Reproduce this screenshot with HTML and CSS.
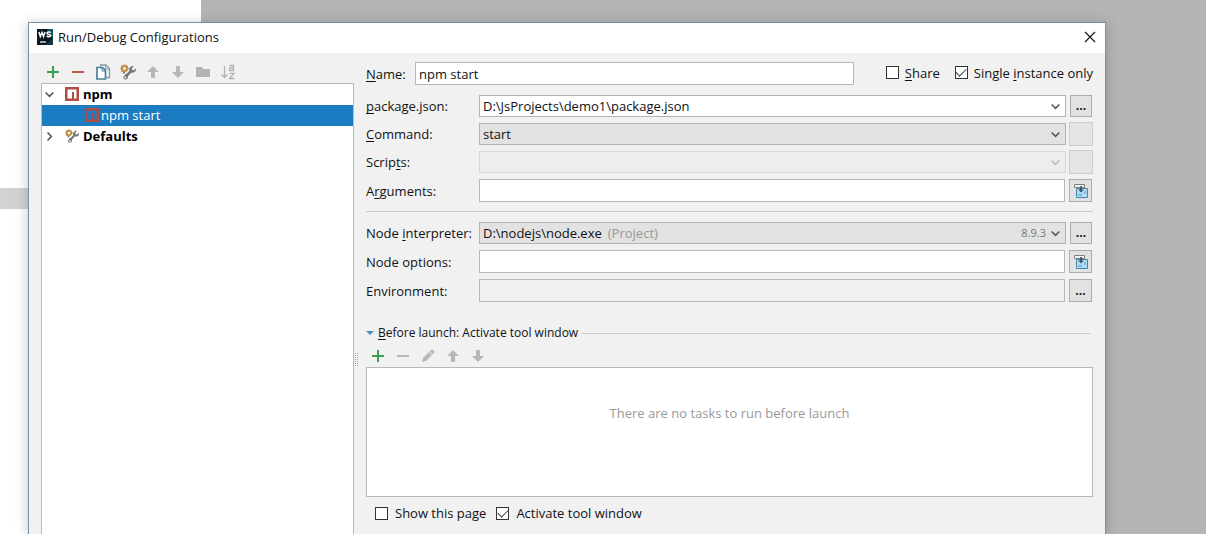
FILE: index.html
```
<!DOCTYPE html>
<html lang="en">
<head>
<meta charset="utf-8">
<title>Run/Debug Configurations</title>
<link rel="stylesheet" href="styles.css">
</head>
<body>
<svg class="defs" aria-hidden="true">
  <defs>
    <symbol id="plus" viewBox="0 0 16 16"><path d="M7 2h2v5h5v2H9v5H7V9H2V7h5z" fill="currentColor"/></symbol>
    <symbol id="minus" viewBox="0 0 16 16"><path d="M2 7h12v2H2z" fill="currentColor"/></symbol>
    <symbol id="up" viewBox="0 0 16 16"><path d="M8 2l6 6h-4v6H6V8H2z" fill="currentColor"/></symbol>
    <symbol id="down" viewBox="0 0 16 16"><path d="M8 14L2 8h4V2h4v6h4z" fill="currentColor"/></symbol>
    <symbol id="chevron" viewBox="0 0 10 10"><path d="M1.500 3.200L5 6.700l3.500-3.500" fill="none" stroke="currentColor" stroke-width="1.400"/></symbol>
    <symbol id="tools" viewBox="0 0 16 16">
      <path d="M4 8v1.500M5.500 10.500l1 3" stroke="#777" stroke-width="2"/>
      <circle cx="4.500" cy="4.600" r="2.500" fill="none" stroke="#c08a42" stroke-width="2"/>
      <path d="M4.500 .4v1.200M.3 4.600h1M7.500 4.600h1.300M1.400 1.600l.9.9M7.500 1.600l-.8.8M1.400 7.700l.9-.9" stroke="#c08a42" stroke-width="1.500"/>
      <path d="M13.800 2l-2 2.300.3 1.700 1.700.3L16 4.400c.3 2-.6 3.800-2.400 4.200-.8.2-1.500.1-2.100-.2L8 12c.2 1.700-.7 3.600-2.600 3.600-1.500 0-2.500-1.600-1.600-3L9.300 7C8.500 4.200 10.500 1.500 13.800 2z" fill="#767676"/>
      <circle cx="5.400" cy="13.600" r="1" fill="#f1f1f1"/>
    </symbol>
    <symbol id="npm" viewBox="0 0 14 14"><path d="M0 0h14v14H0z" fill="#b04c42"/><path d="M2.500 2.500h9v9H9V5H7v6.500H2.500z" fill="var(--inner, #fff)"/></symbol>
    <symbol id="insert" viewBox="0 0 16 16">
      <path d="M3.500 5.500h11v9h-11z" fill="#b4dbf2" stroke="#4288b0"/>
      <path d="M5 11h4v2H5zM11 8h2v3h-2z" fill="#7cb9df"/>
      <path d="M1.500 4.500v-3h10v3z" fill="#f4f4f4" stroke="#808080"/>
      <path d="M7.200 3h1.600v3.500h2L8 9.500l-2.800-3h2z" fill="#42525c"/>
    </symbol>
  </defs>
</svg>

<div class="desktop">
  <div class="backdrop"><div class="backdrop-row"></div></div>

  <main class="dialog">
    <header class="titlebar">
      <svg class="app-icon" viewBox="0 0 16 16" aria-hidden="true">
        <path d="M0 0h16v16H0z" fill="#0b1a20"/><path d="M10 0h6v10z" fill="#175361"/><path d="M16 9v7H9z" fill="#123b46"/>
        <path d="M2 3l1.300 4.500L5 3.500l1.500 4L8 3M13.700 3.700C12.500 2.600 10 2.800 10 4.200c0 1.600 3.700.8 3.700 2.300 0 1.300-2.700 1.600-4 .4" fill="none" stroke="#fff" stroke-width="1.500"/>
        <path d="M3 13h6" stroke="#fff" stroke-width="1.200"/>
      </svg>
      <h1 class="title">Run/Debug Configurations</h1>
      <button class="close" type="button" aria-label="Close">
        <svg viewBox="0 0 12 12" width="12" height="12"><path d="M1 1l10 10M11 1L1 11" stroke="#111" stroke-width="1.100"/></svg>
      </button>
    </header>

    <div class="content">
      <aside class="sidebar">
        <div class="toolbar">
          <button class="tool add" type="button" aria-label="Add"><svg><use href="#plus"/></svg></button>
          <button class="tool remove" type="button" aria-label="Remove"><svg><use href="#minus"/></svg></button>
          <button class="tool" type="button" aria-label="Copy">
            <svg viewBox="0 0 16 16"><path d="M5.500 2.500V1h5.500l3.500 3.500v9h-3" fill="#f1f1f1" stroke="#7d9aa8" stroke-width="1.300"/><path d="M10.500 1.500V5h3.500" fill="none" stroke="#7d9aa8"/><path d="M2 3.500h5.500L10.500 6.500v8.500H2z" fill="#fff" stroke="#46819b" stroke-width="1.700"/><path d="M7 4v3h3" fill="none" stroke="#46819b"/></svg>
          </button>
          <button class="tool" type="button" aria-label="Edit defaults"><svg><use href="#tools"/></svg></button>
          <button class="tool" type="button" aria-label="Move up" disabled><svg><use href="#up"/></svg></button>
          <button class="tool" type="button" aria-label="Move down" disabled><svg><use href="#down"/></svg></button>
          <button class="tool" type="button" aria-label="Create folder" disabled>
            <svg viewBox="0 0 16 16"><path d="M1 3h6l1.500 2H15v8H1z" fill="#b0b4b5"/></svg>
          </button>
          <button class="tool" type="button" aria-label="Sort" disabled>
            <svg viewBox="0 0 16 16"><path d="M4.500 2v11M1.500 10.500l3 3 3-3M9.500 1.500H13.500v5H9.700V4H13.500M9.500 9.500h4.500l-4.500 5h5" fill="none" stroke="#b2b2b2" stroke-width="1.300"/></svg>
          </button>
        </div>
        <ul class="tree">
          <li class="node"><svg class="arrow"><use href="#chevron"/></svg><svg class="node-icon npm"><use href="#npm"/></svg>npm</li>
          <li class="node child"><svg class="node-icon npm"><use href="#npm"/></svg>npm start</li>
          <li class="node"><svg class="arrow closed"><use href="#chevron"/></svg><svg class="node-icon"><use href="#tools"/></svg>Defaults</li>
        </ul>
      </aside>

      <div class="splitter"><span class="grip"></span></div>

      <form class="settings">
        <div class="name-row">
          <label class="name-label" for="name"><u>N</u>ame:</label>
          <input class="field" id="name" type="text" value="npm start">
          <label class="check share"><input type="checkbox"><span><u>S</u>hare</span></label>
          <label class="check"><input type="checkbox" checked><span>Single <u>i</u>nstance only</span></label>
        </div>

        <div class="rows">
          <div class="row">
            <label for="package"><u>p</u>ackage.json:</label>
            <div class="combo editable"><select id="package"><option>D:\JsProjects\demo1\package.json</option></select><svg class="caret"><use href="#chevron"/></svg></div>
            <button class="side" type="button" aria-label="Browse package.json">...</button>
          </div>
          <div class="row">
            <label for="command"><u>C</u>ommand:</label>
            <div class="combo"><select id="command"><option>start</option></select><svg class="caret"><use href="#chevron"/></svg></div>
            <button class="side blank" type="button" aria-label="Command options" disabled></button>
          </div>
          <div class="row">
            <label for="scripts">Scrip<u>t</u>s:</label>
            <div class="combo off"><select id="scripts" disabled></select><svg class="caret"><use href="#chevron"/></svg></div>
            <button class="side blank" type="button" aria-label="Script options" disabled></button>
          </div>
          <div class="row">
            <label for="arguments">A<u>r</u>guments:</label>
            <input class="field" id="arguments" type="text">
            <button class="side tall" type="button" aria-label="Expand arguments"><svg><use href="#insert"/></svg></button>
          </div>
        </div>

        <hr class="rule">

        <div class="rows">
          <div class="row">
            <label for="interpreter">Node <u>i</u>nterpreter:</label>
            <button class="combo interpreter" id="interpreter" type="button" aria-haspopup="listbox"><span>D:\nodejs\node.exe</span><span class="hint">(Project)</span><span class="version">8.9.3</span><svg class="caret"><use href="#chevron"/></svg></button>
            <button class="side" type="button" aria-label="Browse interpreter">...</button>
          </div>
          <div class="row">
            <label for="options">Node options:</label>
            <input class="field" id="options" type="text">
            <button class="side tall" type="button" aria-label="Expand options"><svg><use href="#insert"/></svg></button>
          </div>
          <div class="row">
            <label for="environment">Environment:</label>
            <input class="field readonly" id="environment" type="text" readonly>
            <button class="side tall" type="button" aria-label="Edit environment">...</button>
          </div>
        </div>

        <section class="launch">
          <h2 class="launch-title"><span class="triangle"></span><span><u>B</u>efore launch: Activate tool window</span></h2>
          <div class="toolbar tasks">
            <button class="tool add" type="button" aria-label="Add task"><svg><use href="#plus"/></svg></button>
            <button class="tool" type="button" aria-label="Remove task" disabled><svg><use href="#minus"/></svg></button>
            <button class="tool" type="button" aria-label="Edit task" disabled>
              <svg viewBox="0 0 16 16"><path d="M2 14l1-4 6-6 3 3-6 6zM9.500 3.500l2-1.800h1.500L14.300 3v1.500L12.500 6.500z" fill="#b7b7b7"/></svg>
            </button>
            <button class="tool" type="button" aria-label="Move task up" disabled><svg><use href="#up"/></svg></button>
            <button class="tool" type="button" aria-label="Move task down" disabled><svg><use href="#down"/></svg></button>
          </div>
          <div class="task-list">There are no tasks to run before launch</div>
          <div class="launch-options">
            <label class="check"><input type="checkbox"><span>Show this page</span></label>
            <label class="check"><input type="checkbox" checked><span>Activate tool window</span></label>
          </div>
        </section>
      </form>
    </div>
  </main>
</div>
</body>
</html>
```

FILE: styles.css
```
* { box-sizing: border-box; }

body {
  margin: 0;
  background: #b4b4b4;
  color: #111;
  font: 13px/18px "Open Sans", "Noto Sans", sans-serif;
}

button, input, select { font: inherit; color: inherit; margin: 0; }
svg { display: block; flex: none; }
u { text-underline-offset: 2px; text-decoration-skip-ink: none; }

.defs { width: 0; height: 0; position: absolute; }

.desktop {
  display: grid;
  height: 100vh;
  overflow: hidden;
}

.backdrop {
  grid-area: 1 / 1;
  width: 201px;
  padding-top: 188px;
  background: #fff;
}

.backdrop-row { height: 21px; background: #d2d2d2; }

.dialog {
  grid-area: 1 / 1;
  display: flex;
  flex-direction: column;
  margin: 22px 100px 0 28px;
  border: 1px solid #7890a2;
  border-bottom: 0;
  background: #f1f1f1;
  box-shadow: 0 2px 12px rgba(50, 60, 70, 0.3);
  z-index: 1;
}

.titlebar {
  display: flex;
  align-items: center;
  gap: 5px;
  height: 30px;
  padding: 0 9px 2px 8px;
  background: #fff;
}

.app-icon { width: 16px; height: 16px; }
.title { flex: 1; margin: 0; font-size: 13px; font-weight: 400; }

.close {
  display: flex;
  padding: 0;
  border: 0;
  background: none;
}

.content { display: flex; flex: 1; padding: 0 12px; }

.sidebar {
  display: flex;
  flex-direction: column;
  width: 313px;
  padding-top: 11px;
}

.toolbar { display: flex; gap: 9px; padding: 0 4px 3px; }

.tool {
  display: flex;
  padding: 0;
  border: 0;
  background: none;
}

.tool svg { width: 16px; height: 16px; }
.tool:disabled { color: #b7b7b7; }
.add { color: #3c9f52; }
.remove { color: #b85d4e; }

.tree {
  flex: 1;
  margin: 0;
  padding: 0;
  border: 1px solid #b9b9b9;
  border-bottom: 0;
  background: #fff;
  list-style: none;
}

.node {
  display: flex;
  align-items: center;
  gap: 4px;
  height: 21px;
  padding: 0 0 1px 2px;
  color: #000;
  font-weight: 700;
}

.node-icon { width: 14px; height: 14px; }
.arrow { width: 11px; height: 11px; margin-right: 6px; color: #555; }
.closed { transform: rotate(-90deg); }

.child {
  --inner: #1b7cc2;
  gap: 2px;
  padding-left: 43px;
  background: #1b7cc2;
  color: #fff;
  font-weight: 400;
}

.splitter { display: flex; width: 12px; padding-top: 299px; }

.grip {
  width: 5px;
  height: 15px;
  background:
    repeating-linear-gradient(#f1f1f1 0 1px, transparent 1px 2px),
    repeating-linear-gradient(90deg, #f1f1f1 0 1px, #a5a5a5 1px 2px);
}

.settings { flex: 1; min-width: 0; padding-top: 9px; }

.name-row { display: flex; align-items: center; margin-bottom: 10px; }
.name-label { width: 49px; }
.name-row .field { flex: 1; margin-right: 32px; }
.name-row .check { gap: 6px; padding-bottom: 2px; }
.name-row .share { margin-right: 15px; }

.check { display: flex; align-items: center; gap: 7px; }

.check input {
  display: grid;
  place-items: center;
  width: 13px;
  height: 13px;
  appearance: none;
  border: 1px solid #333;
  background: #fff;
}

.check input:checked::before {
  content: "";
  width: 9px;
  height: 5px;
  margin-bottom: 3px;
  border: solid #444;
  border-width: 0 0 1px 1px;
  transform: rotate(-45deg);
}

.field {
  width: 100%;
  height: 23px;
  padding: 0 3px;
  border: 1px solid #b9b9b9;
  background: #fff;
}

.readonly { background: #f0f0f0; }

.rows { display: grid; gap: 6px; }

.row {
  display: grid;
  grid-template-columns: 110px 1fr 24px;
  column-gap: 3px;
  align-items: center;
}

.row .field { width: auto; margin-right: 1px; }

.combo {
  display: flex;
  align-items: center;
  height: 22px;
  padding: 0 4px 0 3px;
  border: 1px solid #b3b3b3;
  background: #e2e2e2;
}

.combo select {
  flex: 1;
  padding: 0;
  border: 0;
  appearance: none;
  background: none;
  outline: 0;
}

.caret { width: 11px; height: 11px; color: #555; }
.editable { background: #fff; }
.off { border-color: #d8d8d8; background: #ededed; }
.off .caret { color: #bbb; }
.hint { margin-left: 6px; color: #969696; }
.version { margin: 0 4px 0 auto; color: #777; font-size: 11px; }

.side {
  display: flex;
  align-items: center;
  justify-content: center;
  justify-self: center;
  width: 22px;
  height: 22px;
  padding: 0;
  border: 1px solid #adadad;
  background: #e2e2e2;
  font-size: 12px;
  font-weight: 700;
}

.side svg { width: 16px; height: 16px; }
.tall { justify-self: start; width: 23px; height: 23px; }
.blank { width: 24px; height: 24px; margin: -1px 0; border-color: #ccc; background: #e4e4e4; }

.rule {
  height: 1px;
  margin: 9px 0 10px;
  border: 0;
  background: #c9c9c9;
}

.launch { padding-top: 22px; }

.launch-title {
  display: flex;
  align-items: center;
  gap: 4px;
  margin: 0 0 6px;
  font-size: 12px;
  font-weight: 400;
}

.launch-title::after {
  content: "";
  flex: 1;
  height: 1px;
  margin-right: 2px;
  background: #ccc;
}

.triangle {
  border: solid transparent;
  border-width: 4px 4px 0;
  border-top-color: #4b8fc0;
}

.task-list {
  height: 130px;
  padding-top: 36px;
  border: 1px solid #b9b9b9;
  background: #fff;
  color: #999;
  text-align: center;
}

.launch-options { display: flex; gap: 10px; padding: 7px 9px; }
```
